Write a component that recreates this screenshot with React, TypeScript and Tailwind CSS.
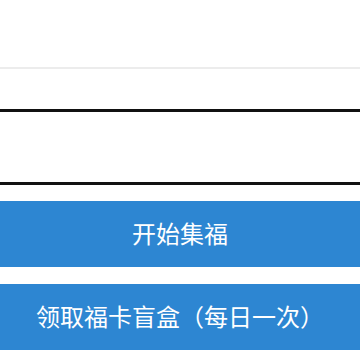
export default function App() {
  return (
    <div
      className="w-[360px] h-[360px] overflow-hidden bg-white flex flex-col"
      style={{ fontFamily: '"Noto Sans", "Noto Sans CJK SC", sans-serif' }}
    >
      {/* header area */}
      <div className="h-[69px] shrink-0 border-b-2 border-[#ececec]" />

      {/* input box */}
      <div className="mt-[40px] h-[76px] shrink-0 border-y-[3px] border-[#111]" />

      <div className="mt-[16px] flex flex-col gap-[17px]">
        <button className="h-[66px] w-full bg-[#2d86d2] text-white text-[24px] leading-none">
          开始集福
        </button>
        <button className="h-[66px] w-full bg-[#2d86d2] text-white text-[24px] leading-none">
          领取福卡盲盒（每日一次）
        </button>
      </div>
    </div>
  );
}
